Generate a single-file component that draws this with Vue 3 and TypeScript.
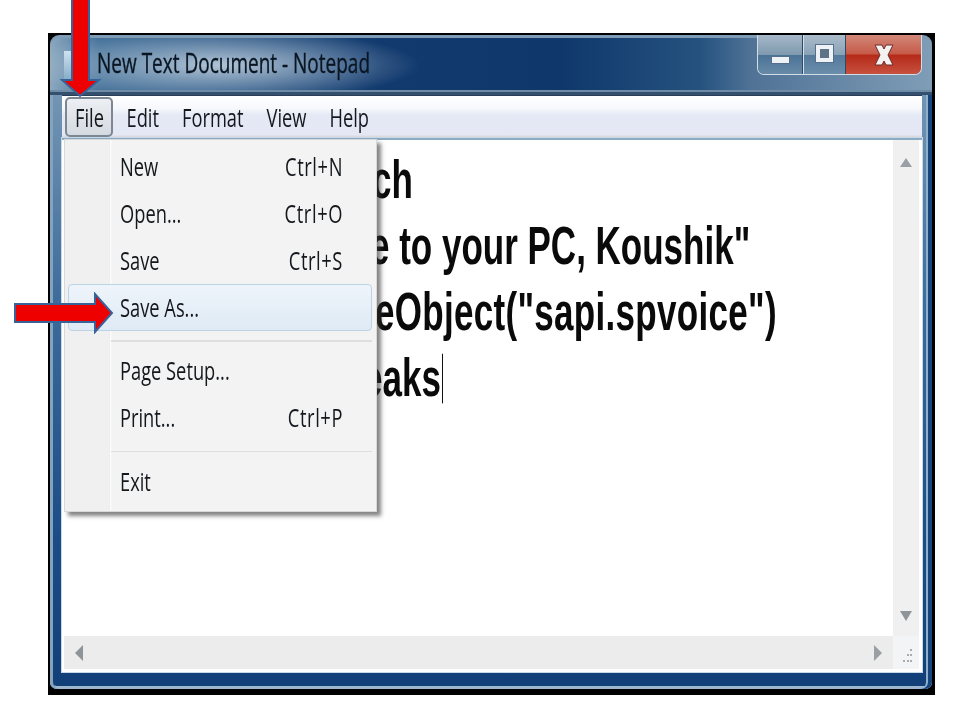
<script setup lang="ts">
interface Item { label?: string; key?: string; active?: boolean; sep?: boolean }
const menus: string[] = ['Edit', 'Format', 'View', 'Help']
const items: Item[] = [
  { label: 'New', key: 'Ctrl+N' },
  { label: 'Open...', key: 'Ctrl+O' },
  { label: 'Save', key: 'Ctrl+S' },
  { label: 'Save As...', active: true },
  { sep: true },
  { label: 'Page Setup...' },
  { label: 'Print...', key: 'Ctrl+P' },
  { sep: true },
  { label: 'Exit' },
]
</script>

<template>
  <div class="page">
    <div class="window">
      <div class="titlebar">
        <div class="doc-icon"></div>
        <span class="title tall">New Text Document - Notepad</span>
        <div class="controls">
          <div class="ctl ctl-min"><div class="min-glyph"></div></div>
          <div class="ctl ctl-max"><div class="max-glyph"></div></div>
          <div class="ctl ctl-close">
            <svg width="30" height="26" viewBox="0 0 30 26">
              <path d="M6 3h7l2 4 2-4h7l-5 10 5 10h-7l-2-4-2 4H6l5-10z" fill="#f4f1f1" stroke="#6b2a2a" stroke-width="1" />
            </svg>
          </div>
        </div>
      </div>
      <div class="inner">
        <div class="menubar">
          <div class="menu-btn menu-file"><span class="tall">File</span></div>
          <div v-for="m in menus" :key="m" class="menu-btn"><span class="tall">{{ m }}</span></div>
        </div>
        <div class="client">
          <div class="upper">
            <div class="editor">
              <div class="line l1">ch</div>
              <div class="line l2">e to your PC, Koushik"</div>
              <div class="line l3">eObject("sapi.spvoice")</div>
              <div class="line l4">eaks<span class="caret"></span></div>
            </div>
            <div class="vscroll">
              <svg width="14" height="10" viewBox="0 0 14 10"><path d="M7 0l6 9H1z" fill="#9a9fa5" /></svg>
              <svg width="14" height="10" viewBox="0 0 14 10"><path d="M1 0h12L7 10z" fill="#8f9499" /></svg>
            </div>
          </div>
          <div class="hrow">
            <div class="hscroll">
              <svg width="9" height="16" viewBox="0 0 9 16"><path d="M8 0v16L0 8z" fill="#8f9499" /></svg>
              <svg width="9" height="16" viewBox="0 0 9 16"><path d="M1 0v16l8-8z" fill="#9a9fa5" /></svg>
            </div>
            <div class="grip">
              <svg width="16" height="18" viewBox="0 0 16 18" fill="#a9adb2">
                <rect x="12" y="1" width="2" height="2" /><rect x="9" y="6" width="2" height="2" />
                <rect x="12" y="6" width="2" height="2" /><rect x="5" y="12" width="2" height="2" />
                <rect x="9" y="12" width="2" height="2" /><rect x="12" y="12" width="2" height="2" />
              </svg>
            </div>
          </div>
        </div>
      </div>

      <div class="dropdown">
        <template v-for="(it, i) in items" :key="i">
          <div v-if="it.sep" class="sep"></div>
          <div v-else class="item" :class="{ active: it.active }">
            <span class="tall">{{ it.label }}</span>
            <span v-if="it.key" class="tall key">{{ it.key }}</span>
          </div>
        </template>
      </div>
    </div>

    <svg class="arrow-down" width="42" height="98" viewBox="0 0 42 98">
      <path d="M12 -2h17v82h10L20 96 2 80h10z" fill="#ee0000" stroke="#36639a" stroke-width="2" />
    </svg>
    <svg class="arrow-right" width="100" height="42" viewBox="0 0 100 42">
      <path d="M1 12h80V2l17 19-17 19V30H1z" fill="#ee0000" stroke="#36639a" stroke-width="2" />
    </svg>
  </div>
</template>

<style>
html, body { margin: 0; background: #fff; }
</style>

<style scoped>
.page {
  position: relative;
  width: 960px;
  height: 720px;
  overflow: hidden;
  box-sizing: border-box;
  padding: 33px 25px 25px 48px;
  background: #fff;
  font-family: "Open Sans", "Liberation Sans", sans-serif;
  filter: blur(0.45px);
}
.window {
  position: relative;
  box-sizing: border-box;
  width: 887px;
  height: 662px;
  display: flex;
  flex-direction: column;
  background: #000;
  padding: 2px 3px 6px 2px;
}
.titlebar, .inner { position: relative; }
.titlebar {
  height: 60px;
  flex: none;
  display: flex;
  align-items: flex-start;
  border-radius: 9px 9px 0 0;
  box-shadow: inset 0 3px 0 #7f9cb6, inset 0 -3px 0 #33516e, inset 0 -5px 0 #6f8ca6;
  background:
    radial-gradient(ellipse 200px 36px at 170px 30px, rgba(200, 215, 228, .85), rgba(200, 215, 228, 0) 100%),
    linear-gradient(90deg, #8ba8bf 0, #3f6d96 50px, #123a6e 330px, #0f376b 510px, #25527f 650px, #4f7296 700px, #7f9db6 100%);
}
.doc-icon {
  width: 8px;
  height: 28px;
  margin: 16px 0 0 14px;
  background: linear-gradient(#cfe3ef, #88aec8);
}
.title {
  margin: 15px 0 0 25px;
  font-size: 19px;
  line-height: 26px;
  color: #0a1622;
  -webkit-text-stroke: 0.25px #0a1622;
  white-space: nowrap;
}
.tall {
  display: inline-block;
  transform: scaleY(1.42);
  white-space: nowrap;
}
.controls {
  margin-left: auto;
  margin-right: 10px;
  display: flex;
  width: 165px;
  height: 40px;
  border: 1px solid #d3dde6;
  border-top: none;
  border-radius: 0 0 7px 7px;
  overflow: hidden;
  box-sizing: border-box;
}
.ctl {
  display: flex;
  align-items: center;
  justify-content: center;
  height: 100%;
  box-sizing: border-box;
}
.ctl-min {
  width: 45px;
  background: linear-gradient(#a6b9c9 0, #7f99af 50%, #4b7396 52%, #678aa8 100%);
  border-right: 1px solid #2c4a66;
}
.ctl-max {
  width: 43px;
  background: linear-gradient(#abbccb 0, #8aa2b6 50%, #54799b 52%, #6b8eab 100%);
  border-left: 1px solid #d7e0e8;
  border-right: 1px solid #2c4a66;
}
.ctl-close {
  flex: 1;
  background: linear-gradient(#d2887a 0, #c65a48 48%, #b52a18 52%, #c8513f 100%);
}
.min-glyph {
  width: 17px;
  height: 6px;
  margin-top: 11px;
  background: #eef2f6;
  border: 1px solid #55708a;
}
.max-glyph {
  box-sizing: border-box;
  width: 17px;
  height: 17px;
  margin-top: -3px;
  background: #5f7388;
  border: 4px solid #eef2f6;
  outline: 1px solid #55708a;
}
.inner {
  flex: 1;
  display: flex;
  flex-direction: column;
  padding: 0 10px 17px 12px;
  min-height: 0;
  background: linear-gradient(#7395b3 0, #3d6b9b 35%, #1c4c86 75%, #123f78 100%);
  box-shadow: inset 3px 0 0 #84a3be, inset -4px 0 0 #16447c, inset -6px 0 0 #8fb0cc, inset 0 -3px 0 #9db7cf;
  border-radius: 0 0 7px 7px;
}
.menubar {
  height: 43px;
  flex: none;
  display: flex;
  align-items: center;
  box-sizing: border-box;
  padding: 0 0 0 3px;
  border-top: 1px solid #2a3f55;
  background: linear-gradient(#ffffff 0, #f6f8fc 30%, #e4e9f5 45%, #e3e8f4 92%, #d9cfca 100%);
}
.menu-btn {
  font-size: 18.3px;
  line-height: 26px;
  color: #14181c;
  padding: 0 11.5px;
}
.menu-file {
  box-sizing: border-box;
  width: 48px;
  height: 40px;
  line-height: 36px;
  padding: 0 0 0 8px;
  margin-right: 2px;
  background: linear-gradient(#eceff3, #d5dae1);
  border: 2px solid #7c8794;
  border-radius: 5px;
}
.client {
  flex: 1;
  display: flex;
  flex-direction: column;
  min-height: 0;
  background: #fff;
  border-top: 2px solid #8cabc4;
  padding: 0 3px 3px 2px;
  box-shadow: 0 0 0 1px #c7d8e6;
}
.upper { flex: 1; display: flex; min-height: 0; }
.editor {
  flex: 1;
  padding: 6px 0 0 312px;
  min-width: 0;
  font-family: "Liberation Sans", Arial, sans-serif;
  font-weight: 700;
  font-size: 35px;
  color: #0a0a0a;
}
.line {
  height: 66px;
  line-height: 66px;
  white-space: nowrap;
  transform: scaleY(1.55);
}
.l1 { margin-left: -4px; }
.l2 { margin-left: -6px; }
.l3 { margin-left: -1px; letter-spacing: 0.3px; }
.l4 { margin-left: -13px; }
.caret {
  display: inline-block;
  width: 1.5px;
  height: 32px;
  margin-left: 1px;
  background: #111;
  vertical-align: -5px;
}
.vscroll {
  width: 26px;
  flex: none;
  display: flex;
  flex-direction: column;
  align-items: center;
  justify-content: space-between;
  padding: 18px 0 15px;
  box-sizing: border-box;
  background: #f0f0f0;
}
.hrow { height: 33px; flex: none; display: flex; background: #f3f4f5; }
.hscroll {
  flex: 1;
  display: flex;
  align-items: center;
  justify-content: space-between;
  padding: 0 11px;
  background: #ececec;
}
.grip {
  width: 26px;
  flex: none;
  display: flex;
  align-items: flex-end;
  justify-content: center;
  padding-bottom: 3px;
  box-sizing: border-box;
}
.dropdown {
  position: absolute;
  left: 16px;
  top: 106px;
  width: 313px;
  height: 373px;
  box-sizing: border-box;
  padding: 3px 4px 4px 3px;
  background: linear-gradient(90deg, #f0f0f0 0, #f0f0f0 44px, #dcdcdc 44px, #fff 45px, #f3f3f3 47px);
  border: 1px solid #d8d8d8;
  box-shadow: 4px 4px 4px rgba(50, 50, 50, .6);
  color: #14181c;
  font-size: 18.3px;
}
.item {
  position: relative;
  box-sizing: border-box;
  height: 47px;
  display: flex;
  align-items: center;
  justify-content: space-between;
  padding: 0 28px 3px 51px;
  border: 1px solid transparent;
}
.key { letter-spacing: 0.6px; }
.item.active {
  background: linear-gradient(#eef4fa, #dfeaf5);
  border: 1px solid #bcd3e6;
  border-radius: 4px;
}
.sep {
  height: 16.5px;
  margin-left: 43px;
  box-sizing: border-box;
  border-top: 9px solid transparent;
  border-bottom: 6.5px solid transparent;
  background: #dedede;
  background-clip: padding-box;
}
.arrow-down { position: absolute; left: 60px; top: 0; }
.arrow-right { position: absolute; left: 14px; top: 292px; }
</style>
